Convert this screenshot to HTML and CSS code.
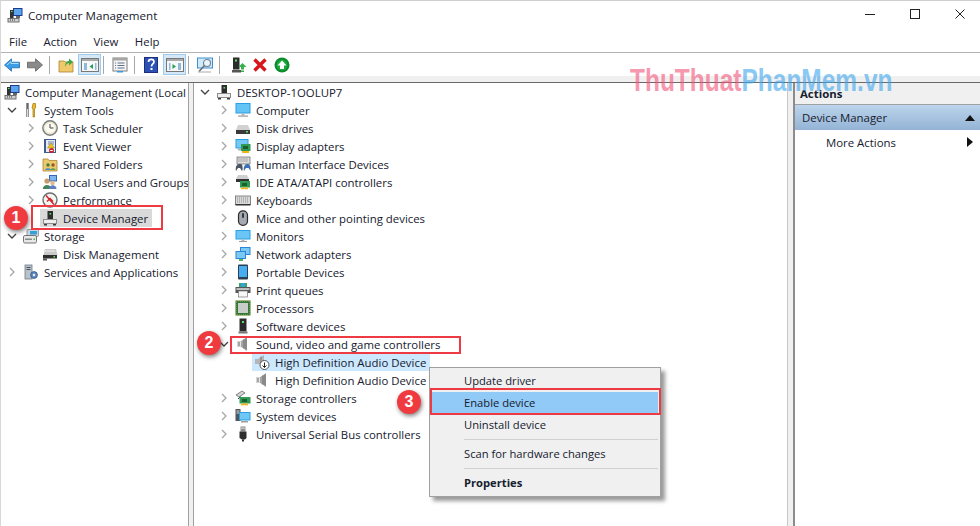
FILE: index.html
```html
<!DOCTYPE html>
<html lang="en">
<head>
  <meta charset="UTF-8">
  <title>Computer Management</title>
  <link rel="stylesheet" href="styles.css">
</head>
<body>
  <svg class="defs" aria-hidden="true">
    <symbol id="i-mgmt" viewBox="0 0 16 16"><rect x="6" y="1" width="9.5" height="8" fill="#1f3c8c"/><rect x="7" y="2" width="7.5" height="6" fill="#5aa5ee"/><rect x="9" y="9" width="4" height="2" fill="#666"/><rect x="3" y="3" width="3.5" height="8" fill="#333"/><rect x="4" y="4" width="1.5" height="1" fill="#6be36b"/><rect x="0.5" y="11" width="12" height="4.5" fill="#6f6f6f"/><rect x="1.5" y="12" width="10" height="2.5" fill="#cfcfcf"/><path d="M3 13h1M5 13h1M7 13h1" stroke="#333"/></symbol>
    <symbol id="i-tools" viewBox="0 0 16 16"><path d="M4.5 1v14" stroke="#666" stroke-width="2.4" fill="none"/><path d="M4.5 7v8" stroke="#ddd"/><path d="M10 1.5h2.5V6l-1 1v8H10V7L9 6z" fill="#f2b91e" stroke="#8a6507" stroke-width=".6"/></symbol>
    <symbol id="i-clock" viewBox="0 0 16 16"><circle cx="8" cy="8" r="7.2" fill="#ece4cc" stroke="#77807e" stroke-width="1.4"/><circle cx="8" cy="8" r="5" fill="#fbfaf3"/><path d="M8 4v4h3.5" stroke="#444" fill="none"/></symbol>
    <symbol id="i-event" viewBox="0 0 16 16"><rect x="2" y="1" width="12" height="14" fill="#3f5d90"/><rect x="4" y="2" width="9" height="12" fill="#e7ecf3"/><path d="M6 4h6M6 6h6" stroke="#6f84a8"/><path d="M9 5l3.5 5h-7z" fill="#f2c31c" stroke="#9b7b10" stroke-width=".5"/><circle cx="9.5" cy="12.5" r="2.5" fill="#c5232b"/><rect x="8.2" y="12" width="2.6" height="1" fill="#fff"/></symbol>
    <symbol id="i-shared" viewBox="0 0 16 16"><path d="M1 3h5l1 1.5h8V15H1z" fill="#eec96c" stroke="#a98734" stroke-width=".8"/><circle cx="6" cy="9" r="1.7" fill="#3f7f3f"/><path d="M3 14c0-2.5 6-2.5 6 0z" fill="#4d8bc9"/><circle cx="11" cy="9" r="1.7" fill="#8a5a30"/><path d="M8.500 14c0-2.500 5-2.500 5 0z" fill="#5aa14f"/></symbol>
    <symbol id="i-users" viewBox="0 0 16 16"><rect x="7" y="1" width="8" height="6.5" fill="#3566b5"/><rect x="8" y="2" width="6" height="4.5" fill="#7fb5ee"/><circle cx="5" cy="7" r="2.6" fill="#cb9a6b"/><path d="M.8 15c0-5.500 8.400-5.500 8.400 0z" fill="#45855a"/><circle cx="10.500" cy="9" r="2.200" fill="#e1b78c"/><path d="M7 15c0-5 7.500-5 7.500 0z" fill="#5d7fc0"/></symbol>
    <symbol id="i-perf" viewBox="0 0 16 16"><circle cx="8" cy="8" r="7" fill="#f4f4f0" stroke="#6e6e6e" stroke-width="1.4"/><path d="M4 3.500l8 9M5 9.500l3-3 3 3" stroke="#d1262c" stroke-width="1.500" fill="none"/></symbol>
    <symbol id="i-dev" viewBox="0 0 16 16"><rect x="5.500" y="1" width="5.500" height="8" fill="#2d2d2d"/><rect x="7.500" y="3" width="1.600" height="1.600" fill="#54e35c"/><rect x="1" y="9" width="14" height="5" fill="#8c8c8c"/><rect x="2" y="10" width="12" height="3" fill="#efefef"/><rect x="2" y="14" width="3" height="1.500" fill="#3c3c3c"/><rect x="11" y="14" width="3" height="1.500" fill="#3c3c3c"/></symbol>
    <symbol id="i-storage" viewBox="0 0 16 16"><rect x="4" y="1.500" width="11.500" height="7" rx="1" fill="#cfd6dc" stroke="#6e7c88" stroke-width=".7"/><rect x="7" y="3" width="7" height="3.500" fill="#35a0d8"/><rect x=".5" y="7.500" width="13" height="7.500" rx="1.400" fill="#e8e8e8" stroke="#666" stroke-width=".9"/><rect x="2" y="10.500" width="7" height="1.500" fill="#888"/><rect x="10.500" y="10.500" width="1.500" height="1.500" fill="#46b04a"/></symbol>
    <symbol id="i-disk" viewBox="0 0 16 16"><path d="M3 3h11l1.500 6h-14z" fill="#c9c9c9"/><rect x="1" y="9" width="14" height="3.500" fill="#2e2e2e"/><rect x="11.500" y="10" width="1.500" height="1.500" fill="#5de35f"/><rect x="1" y="12.500" width="4" height="2" fill="#555"/><path d="M3 5h10" stroke="#f2f2f2"/></symbol>
    <symbol id="i-services" viewBox="0 0 16 16"><rect x="2" y="1" width="7" height="14" fill="#b9c1cb" stroke="#6f7a87" stroke-width=".8"/><path d="M3.500 3.500h4M3.500 5.500h4" stroke="#46505c"/><circle cx="11" cy="11" r="3.400" fill="#5f88c0" stroke="#31507e" stroke-width=".8"/><circle cx="11" cy="11" r="1.200" fill="#e8eef7"/></symbol>
    <symbol id="i-computer" viewBox="0 0 16 16"><rect x=".5" y="1" width="15" height="10.500" fill="#2a9fe4"/><rect x="1.500" y="2" width="13" height="8.500" fill="#64c4f5"/><rect x="6.500" y="11.500" width="3" height="2" fill="#b8b8b8"/><rect x="3" y="13.500" width="10" height="1.200" fill="#9c9c9c"/></symbol>
    <symbol id="i-drive" viewBox="0 0 16 16"><path d="M3 5h10l2 5H1z" fill="#d2d2d2"/><rect x="1" y="10" width="14" height="4" fill="#3a3a3a"/><rect x="11" y="11" width="2" height="1.500" fill="#5de35f"/></symbol>
    <symbol id="i-display" viewBox="0 0 16 16"><rect x=".5" y="1" width="13" height="9.500" fill="#2a9fe4"/><rect x="1.500" y="2" width="11" height="7.500" fill="#75c9f6"/><rect x="3" y="10.500" width="6" height="2" fill="#b0b0b0"/><rect x="6" y="6" width="9.500" height="7" fill="#2f9a52"/><path d="M8 8h5v3H8z" fill="#1b5e31"/><rect x="7" y="13" width="7" height="2" fill="#f0b31b"/></symbol>
    <symbol id="i-hid" viewBox="0 0 16 16"><rect x="2" y="1" width="13" height="7" fill="#dcdcdc" stroke="#777" stroke-width=".8"/><path d="M3.500 3h10M3.500 5h10" stroke="#777" stroke-dasharray="1 1"/><path d="M1 15c-1-4 1-7 3-7h2c2 0 2 7 1 7l-2-3H3z" fill="#4b5563"/><path d="M9 15c-1-4 1-7 3-7h1c2 0 3 3 2.500 7l-2-3H11z" fill="#3f6fb5"/></symbol>
    <symbol id="i-ide" viewBox="0 0 16 16"><path d="M3 1h9l2 4H1z" fill="#cfcfcf"/><rect x="1" y="5" width="13" height="3" fill="#333"/><rect x="5" y="7" width="10" height="6.500" fill="#2f9a52"/><path d="M7 9h5v3H7z" fill="#1b5e31"/><rect x="6" y="13.500" width="7" height="1.700" fill="#f0b31b"/></symbol>
    <symbol id="i-keyboard" viewBox="0 0 16 16"><rect x=".5" y="4" width="15" height="8.500" fill="#dadada" stroke="#6b6b6b" stroke-width=".8"/><path d="M2 6h12M2 8h12M2 10h12" stroke="#8a8a8a" stroke-dasharray="1 1"/><rect x=".5" y="12" width="15" height="1.500" fill="#333"/></symbol>
    <symbol id="i-mouse" viewBox="0 0 16 16"><rect x="3.500" y=".8" width="9" height="14.600" rx="4.300" fill="#a4aab0" stroke="#2d2d2d" stroke-width="1.200"/><rect x="7" y="3" width="2" height="5" rx="1" fill="#2e3a46"/></symbol>
    <symbol id="i-monitor" viewBox="0 0 16 16"><rect x=".5" y="2" width="15" height="9.500" fill="#2a9fe4"/><rect x="1.500" y="3" width="13" height="7.500" fill="#6cc6f5"/><rect x="6.500" y="11.500" width="3" height="1.500" fill="#b8b8b8"/><rect x="4" y="13" width="8" height="1" fill="#9c9c9c"/></symbol>
    <symbol id="i-net" viewBox="0 0 16 16"><rect x="5" y="1" width="10.500" height="8" fill="#2a86d8"/><rect x="6" y="2" width="8.500" height="6" fill="#7cc8f5"/><rect x=".5" y="5" width="10.500" height="8" fill="#2a86d8"/><rect x="1.500" y="6" width="8.500" height="6" fill="#7cc8f5"/><rect x="4" y="13" width="4" height="2" fill="#4fb45a"/></symbol>
    <symbol id="i-portable" viewBox="0 0 16 16"><rect x="3" y=".5" width="10" height="15" rx="1" fill="#2c3e50"/><rect x="4" y="2" width="8" height="11" fill="#46aef0"/></symbol>
    <symbol id="i-printer" viewBox="0 0 16 16"><path d="M4 1h8v4H4z" fill="#3ba55d"/><path d="M6 1h4v4H6z" fill="#39a0e0"/><rect x=".5" y="5" width="15" height="6" fill="#555"/><rect x="1.500" y="6" width="13" height="2" fill="#bdbdbd"/><rect x="3.500" y="9" width="9" height="6" fill="#f7f7f7" stroke="#777" stroke-width=".7"/></symbol>
    <symbol id="i-cpu" viewBox="0 0 16 16"><rect x=".5" y=".5" width="15" height="15" fill="#2f7a3c"/><rect x="1" y="1" width="14" height="14" fill="none" stroke="#d7b13a" stroke-width=".8" stroke-dasharray="1 1"/><rect x="3" y="3" width="10" height="10" fill="#c9cdc9"/></symbol>
    <symbol id="i-software" viewBox="0 0 16 16"><rect x="4.500" y=".5" width="7" height="13" fill="#2b2b2b"/><rect x="7" y="3" width="2" height="2" fill="#58e35f"/><rect x="3.500" y="13.500" width="9" height="2" fill="#777"/></symbol>
    <symbol id="i-speaker" viewBox="0 0 16 16"><path d="M2 5.500h3.500L12 1v14L5.500 10.500H2z" fill="#a6a6a6"/><path d="M5.500 5.500v5" stroke="#e8e8e8"/><path d="M9 3.500v9M11 2.500v11" stroke="#6e6e6e"/><path d="M2.500 6v4" stroke="#d5d5d5"/></symbol>
    <symbol id="i-speakerdown" viewBox="0 0 16 16"><path d="M1 5h3l6-4v9H4L1 10z" fill="#b5b5b5"/><path d="M7 2.500v7" stroke="#777"/><circle cx="10.500" cy="11" r="4.500" fill="#fff" stroke="#555"/><path d="M10.500 8.500v5M8.500 11.500l2 2 2-2" stroke="#222" fill="none"/></symbol>
    <symbol id="i-storagectl" viewBox="0 0 16 16"><path d="M1 5l6-4 3 2-6 4z" fill="#d5d5d5" stroke="#555" stroke-width=".7"/><path d="M3 9l2-2 3 1" stroke="#333" fill="none"/><rect x="4.500" y="7" width="11" height="6.500" fill="#2f9a52"/><path d="M7 9h5v3H7z" fill="#1b5e31"/><rect x="6" y="13.500" width="7" height="1.800" fill="#f0b31b"/></symbol>
    <symbol id="i-system" viewBox="0 0 16 16"><rect x=".5" y="1" width="5" height="12" fill="#555"/><path d="M1.500 3h3M1.500 5h3" stroke="#ddd"/><rect x="4" y="4" width="11.500" height="8.500" fill="#2a9fe4"/><rect x="5" y="5" width="9.500" height="6.500" fill="#70c7f5"/><rect x="6" y="13" width="7" height="1.500" fill="#9f9f9f"/></symbol>
    <symbol id="i-usb" viewBox="0 0 16 16"><rect x="5.500" y=".5" width="5" height="5" fill="#8d8d8d"/><rect x="6.500" y="1.500" width="1" height="1.500" fill="#fff"/><rect x="8.500" y="1.500" width="1" height="1.500" fill="#fff"/><path d="M4.500 5.500h7V12L10 13.500H7L4.500 12z" fill="#2f2f2f"/><rect x="7" y="13.500" width="2" height="2" fill="#2f2f2f"/></symbol>
    <symbol id="i-open" viewBox="0 0 10 10"><path d="M1 3l4 4 4-4" fill="none" stroke="#404040" stroke-width="1.300"/></symbol>
    <symbol id="i-closed" viewBox="0 0 10 10"><path d="M3 1l4 4-4 4" fill="none" stroke="#a6a6a6" stroke-width="1.300"/></symbol>
  </svg>

  <div class="window">
    <header class="titlebar">
      <svg class="icon title-icon"><use href="#i-mgmt"/></svg>
      <span class="title">Computer Management</span>
      <div class="win-controls">
        <svg class="win-btn" viewBox="0 0 10 10"><path d="M0 5.500h10" stroke="#222"/></svg>
        <svg class="win-btn" viewBox="0 0 10 10"><rect x=".5" y=".5" width="9" height="9" fill="none" stroke="#222"/></svg>
        <svg class="win-btn" viewBox="0 0 10 10"><path d="M.5 .5l9 9M9.500 .5l-9 9" stroke="#222"/></svg>
      </div>
    </header>

    <nav class="menubar">
      <span>File</span><span>Action</span><span>View</span><span>Help</span>
    </nav>

    <div class="toolbar">
      <svg class="tool tool-arrow" viewBox="0 0 16 14"><path d="M.5 7L7.500 .8v3.400h8v5.600h-8v3.400z" fill="#3d9de6" stroke="#1d6db5" stroke-width=".8"/><path d="M3 7l4-3.500v2h7.500" fill="none" stroke="#a9dcfb"/></svg>
      <svg class="tool tool-arrow tool-fwd" viewBox="0 0 16 14"><path d="M15.500 7L8.500 .8v3.400h-8v5.600h8v3.400z" fill="#8a8a8a" stroke="#5f5f5f" stroke-width=".8"/></svg>
      <i class="tool-sep"></i>
      <svg class="tool tool-tight" viewBox="0 0 16 16"><path d="M1 4h5l1 1h8v10H1z" fill="#f0c96a" stroke="#a98734" stroke-width=".8"/><path d="M7 10c0-4 2-6 4-6V1.500L15 5l-4 3.500V6c-1.500 0-3 1.500-4 4z" fill="#3fa648"/></svg>
      <span class="tool-on"><svg class="tool" viewBox="0 0 18 16"><rect x=".5" y="1.500" width="17" height="13" fill="#f7f7f7" stroke="#777"/><rect x="1" y="2" width="16" height="2" fill="#a9a9a9"/><path d="M3 6h3v7H3zM14 6h1.500v7H14z" fill="#8eb9df"/><path d="M12 7v5L8.500 9.500z" fill="#2f9a52"/></svg></span>
      <i class="tool-sep tool-sep-close"></i>
      <svg class="tool" viewBox="0 0 16 16"><rect x="1" y="1" width="14" height="13" fill="#f5f5f5" stroke="#7d7d7d"/><rect x="1" y="1" width="14" height="2.500" fill="#a6a6a6"/><path d="M3 6h1M3 8.500h1M3 11h1M5.500 6h7M5.500 8.500h7M5.500 11h7" stroke="#5f6f86"/><rect x="5" y="14" width="6" height="1.500" fill="#3a9de0"/></svg>
      <i class="tool-sep"></i>
      <svg class="tool tool-tight" viewBox="0 0 16 16"><rect x="1.500" y=".5" width="13" height="15" fill="#2c50b4" stroke="#1c2f7c"/><path d="M5.500 5c0-3.500 5.500-3.500 5.500 0 0 2-2.500 2-2.500 4.500" fill="none" stroke="#fff" stroke-width="1.700"/><rect x="7.500" y="11" width="2" height="2" fill="#fff"/></svg>
      <span class="tool-on"><svg class="tool" viewBox="0 0 18 16"><rect x=".5" y="1.500" width="17" height="13" fill="#f7f7f7" stroke="#777"/><rect x="1" y="2" width="16" height="2" fill="#a9a9a9"/><path d="M3 6h1.500v7H3zM12 6h3v7h-3z" fill="#8eb9df"/><path d="M6.500 7v5l3.500-2.500z" fill="#2f9a52"/></svg></span>
      <i class="tool-sep tool-sep-close"></i>
      <svg class="tool" viewBox="0 0 16 16"><rect x=".5" y="1" width="15" height="10" fill="#cfeafb" stroke="#3d8fd0"/><circle cx="10" cy="6" r="3.500" fill="#e8f5fd" stroke="#6c7f8d" stroke-width="1.100"/><path d="M7.500 8.500L2 14.500" stroke="#6c6c6c" stroke-width="1.500"/><path d="M1 15h13" stroke="#aaa"/></svg>
      <i class="tool-sep"></i>
      <svg class="tool tool-update" viewBox="0 0 16 16"><rect x="2" y=".5" width="6.500" height="12" fill="#2b2b2b"/><rect x="4" y="2.500" width="2" height="2" fill="#58e35f"/><rect x="1" y="13" width="9" height="2.500" fill="#555"/><path d="M11.500 6l4 4H13v2.500h-3V10H7.500z" fill="#36b04a"/><rect x="10" y="13.500" width="3" height="1.500" fill="#36b04a"/></svg>
      <svg class="tool" viewBox="0 0 16 16"><path d="M2.500 2.500l11 11M13.500 2.500l-11 11" stroke="#d8141c" stroke-width="3.400"/></svg>
      <svg class="tool" viewBox="0 0 16 16"><circle cx="8" cy="8" r="7.500" fill="#0d8a2c"/><circle cx="8" cy="8" r="5.500" fill="#19a83c"/><path d="M8 3.500l4.500 5H10V12H6V8.500H3.500z" fill="#fff"/></svg>
    </div>

    <div class="strip"></div>

    <div class="panes">
      <aside class="pane tree-left">
        <div class="row root-left"><span class="node"><svg class="icon"><use href="#i-mgmt"/></svg><span>Computer Management (Local</span></span></div>
        <div class="row d1"><svg class="twisty"><use href="#i-open"/></svg><span class="node"><svg class="icon"><use href="#i-tools"/></svg><span>System Tools</span></span></div>
        <div class="row d2"><svg class="twisty"><use href="#i-closed"/></svg><span class="node"><svg class="icon"><use href="#i-clock"/></svg><span>Task Scheduler</span></span></div>
        <div class="row d2"><svg class="twisty"><use href="#i-closed"/></svg><span class="node"><svg class="icon"><use href="#i-event"/></svg><span>Event Viewer</span></span></div>
        <div class="row d2"><svg class="twisty"><use href="#i-closed"/></svg><span class="node"><svg class="icon"><use href="#i-shared"/></svg><span>Shared Folders</span></span></div>
        <div class="row d2"><svg class="twisty"><use href="#i-closed"/></svg><span class="node"><svg class="icon"><use href="#i-users"/></svg><span>Local Users and Groups</span></span></div>
        <div class="row d2"><svg class="twisty"><use href="#i-closed"/></svg><span class="node"><svg class="icon"><use href="#i-perf"/></svg><span>Performance</span></span></div>
        <div class="row d2 leaf"><span class="node selected-grey"><svg class="icon"><use href="#i-dev"/></svg><span>Device Manager</span></span></div>
        <div class="row d1"><svg class="twisty"><use href="#i-open"/></svg><span class="node"><svg class="icon"><use href="#i-storage"/></svg><span>Storage</span></span></div>
        <div class="row d2 leaf"><span class="node"><svg class="icon"><use href="#i-disk"/></svg><span>Disk Management</span></span></div>
        <div class="row d1"><svg class="twisty"><use href="#i-closed"/></svg><span class="node"><svg class="icon"><use href="#i-services"/></svg><span>Services and Applications</span></span></div>
      </aside>

      <main class="pane tree-main">
        <div class="row d1"><svg class="twisty"><use href="#i-open"/></svg><span class="node"><svg class="icon"><use href="#i-dev"/></svg><span>DESKTOP-1OOLUP7</span></span></div>
        <div class="row d2"><svg class="twisty"><use href="#i-closed"/></svg><span class="node"><svg class="icon"><use href="#i-computer"/></svg><span>Computer</span></span></div>
        <div class="row d2"><svg class="twisty"><use href="#i-closed"/></svg><span class="node"><svg class="icon"><use href="#i-drive"/></svg><span>Disk drives</span></span></div>
        <div class="row d2"><svg class="twisty"><use href="#i-closed"/></svg><span class="node"><svg class="icon"><use href="#i-display"/></svg><span>Display adapters</span></span></div>
        <div class="row d2"><svg class="twisty"><use href="#i-closed"/></svg><span class="node"><svg class="icon"><use href="#i-hid"/></svg><span>Human Interface Devices</span></span></div>
        <div class="row d2"><svg class="twisty"><use href="#i-closed"/></svg><span class="node"><svg class="icon"><use href="#i-ide"/></svg><span>IDE ATA/ATAPI controllers</span></span></div>
        <div class="row d2"><svg class="twisty"><use href="#i-closed"/></svg><span class="node"><svg class="icon"><use href="#i-keyboard"/></svg><span>Keyboards</span></span></div>
        <div class="row d2"><svg class="twisty"><use href="#i-closed"/></svg><span class="node"><svg class="icon"><use href="#i-mouse"/></svg><span>Mice and other pointing devices</span></span></div>
        <div class="row d2"><svg class="twisty"><use href="#i-closed"/></svg><span class="node"><svg class="icon"><use href="#i-monitor"/></svg><span>Monitors</span></span></div>
        <div class="row d2"><svg class="twisty"><use href="#i-closed"/></svg><span class="node"><svg class="icon"><use href="#i-net"/></svg><span>Network adapters</span></span></div>
        <div class="row d2"><svg class="twisty"><use href="#i-closed"/></svg><span class="node"><svg class="icon"><use href="#i-portable"/></svg><span>Portable Devices</span></span></div>
        <div class="row d2"><svg class="twisty"><use href="#i-closed"/></svg><span class="node"><svg class="icon"><use href="#i-printer"/></svg><span>Print queues</span></span></div>
        <div class="row d2"><svg class="twisty"><use href="#i-closed"/></svg><span class="node"><svg class="icon"><use href="#i-cpu"/></svg><span>Processors</span></span></div>
        <div class="row d2"><svg class="twisty"><use href="#i-closed"/></svg><span class="node"><svg class="icon"><use href="#i-software"/></svg><span>Software devices</span></span></div>
        <div class="row d2"><svg class="twisty"><use href="#i-open"/></svg><span class="node"><svg class="icon"><use href="#i-speaker"/></svg><span>Sound, video and game controllers</span></span></div>
        <div class="row d3"><span class="node selected-blue"><svg class="icon"><use href="#i-speakerdown"/></svg><span>High Definition Audio Device</span></span></div>
        <div class="row d3"><span class="node"><svg class="icon"><use href="#i-speaker"/></svg><span>High Definition Audio Device</span></span></div>
        <div class="row d2"><svg class="twisty"><use href="#i-closed"/></svg><span class="node"><svg class="icon"><use href="#i-storagectl"/></svg><span>Storage controllers</span></span></div>
        <div class="row d2"><svg class="twisty"><use href="#i-closed"/></svg><span class="node"><svg class="icon"><use href="#i-system"/></svg><span>System devices</span></span></div>
        <div class="row d2"><svg class="twisty"><use href="#i-closed"/></svg><span class="node"><svg class="icon"><use href="#i-usb"/></svg><span>Universal Serial Bus controllers</span></span></div>
      </main>

      <aside class="pane actions">
        <div class="actions-head">Actions</div>
        <div class="actions-group">
          <span>Device Manager</span>
          <svg class="caret" viewBox="0 0 10 6"><path d="M5 0l5 6H0z" fill="#111"/></svg>
        </div>
        <div class="actions-item">
          <span>More Actions</span>
          <svg class="caret-right" viewBox="0 0 6 10"><path d="M0 0l6 5-6 5z" fill="#111"/></svg>
        </div>
      </aside>
    </div>
  </div>

  <!-- stuff drawn on top of the window -->
  <div class="watermark"><span class="wm-red">ThuThuat</span><span class="wm-blue">PhanMem.vn</span></div>

  <ul class="context-menu">
    <li>Update driver</li>
    <li class="active">Enable device</li>
    <li>Uninstall device</li>
    <li class="sep"></li>
    <li>Scan for hardware changes</li>
    <li class="sep"></li>
    <li class="bold">Properties</li>
  </ul>

  <div class="mark mark-device"></div>
  <div class="mark mark-sound"></div>
  <div class="mark mark-enable"></div>
  <div class="badge badge-1">1</div>
  <div class="badge badge-2">2</div>
  <div class="badge badge-3">3</div>
</body>
</html>
```

FILE: styles.css
```css
* {
  margin: 0;
  padding: 0;
  box-sizing: border-box;
}

html,
body {
  height: 100%;
  overflow: hidden;
}

body {
  position: relative;
  font-family: "Open Sans", "Noto Sans", sans-serif;
  font-size: 11.4px;
  color: #16202e;
  background: #fff;
}

.defs {
  position: absolute;
  width: 0;
  height: 0;
}

.icon {
  width: 16px;
  height: 16px;
  flex: none;
}

.window {
  height: 526px;
  display: flex;
  flex-direction: column;
  border-top: 1px solid #cfcfcf;
  border-left: 1px solid #d8d8d8;
}

/* title bar */
.titlebar {
  height: 29px;
  display: flex;
  align-items: center;
  padding: 0 0 1px 6px;
}

.title {
  margin-left: 5px;
  font-size: 11.6px;
}

.win-controls {
  margin-left: auto;
  display: flex;
  gap: 35px;
  padding: 0 15px 2px 0;
}

.win-btn {
  width: 10px;
  height: 10px;
}

/* menu */
.menubar {
  height: 23px;
  display: flex;
  align-items: center;
  gap: 16.500px;
  padding-left: 8px;
  border-bottom: 1px solid #b4b4b4;
}

/* toolbar */
.toolbar {
  height: 23px;
  display: flex;
  align-items: center;
  padding-left: 3px;
  gap: 6px;
}

.tool {
  width: 16px;
  height: 16px;
  flex: none;
}

.tool-arrow {
  height: 14px;
}

.tool-fwd {
  margin-left: 1px;
}

.tool-tight {
  margin-right: -2px;
}

.tool-update {
  margin-left: 3px;
  margin-right: -1px;
}

.tool-sep {
  width: 1px;
  height: 18px;
  background: #a8a8a8;
  margin-right: 2px;
}

.tool-sep-close {
  margin-left: -4px;
}

.tool-on {
  width: 23px;
  height: 21px;
  display: flex;
  align-items: center;
  justify-content: center;
  background: #d5e8f8;
  border: 1px solid #9fcbee;
}

.tool-on .tool {
  width: 18px;
}

.strip {
  height: 7px;
  background: #f0f0f0;
  border-bottom: 1px solid #696969;
}

/* panes */
.panes {
  flex: 1;
  display: flex;
  min-height: 0;
  background: #f0f0f0;
}

.pane {
  overflow: hidden;
  background: #fff;
}

.tree-left {
  width: 188px;
  border-right: 1px solid #a0a0a0;
}

.tree-main {
  width: 595px;
  margin: 0 5px 0 4px;
  border-left: 1px solid #a0a0a0;
  border-right: 1px solid #c8c8c8;
}

.actions {
  flex: 1;
  border-left: 2px solid #8c8c8c;
}

/* tree rows */
.row {
  height: 18px;
  display: flex;
  align-items: center;
  white-space: nowrap;
}

.root-left {
  padding-left: 1px;
}

.d1 {
  padding-left: 6px;
}

.d2 {
  padding-left: 25px;
}

.d3 {
  padding-left: 58px;
}

.twisty {
  width: 10px;
  height: 10px;
  margin-right: 4px;
  flex: none;
}

.leaf {
  padding-left: 39px;
}

.node {
  height: 18px;
  display: inline-flex;
  align-items: center;
  gap: 5px;
  padding: 0 4px 0 2px;
}

.selected-grey {
  background: #d9d9d9;
}

.selected-blue {
  background: #cce8ff;
}

/* actions pane */
.actions-head {
  height: 22px;
  display: flex;
  align-items: center;
  padding-left: 5px;
  font-weight: 700;
  background: #f0f0f0;
  border-bottom: 1px solid #a0a0a0;
}

.actions-group {
  height: 25px;
  display: flex;
  align-items: center;
  justify-content: space-between;
  padding: 0 5px 0 7px;
  background: linear-gradient(#bcd4ec, #94b3d5);
}

.caret {
  width: 10px;
  height: 6px;
}

.actions-item {
  height: 24px;
  display: flex;
  align-items: center;
  justify-content: space-between;
  padding: 0 7px 0 31px;
}

.caret-right {
  width: 6px;
  height: 10px;
}

/* overlays */
.watermark {
  position: absolute;
  left: 630px;
  top: 62px;
  font-family: "Liberation Sans", sans-serif;
  font-weight: 700;
  font-size: 32px;
  line-height: 36px;
  white-space: nowrap;
  opacity: .6;
  transform: scaleX(.765);
  transform-origin: left top;
}

.wm-red {
  color: #f2567a;
}

.wm-blue {
  color: #3ba6ee;
}

.context-menu {
  position: absolute;
  left: 429px;
  top: 367px;
  width: 232px;
  height: 130px;
  padding: 2px;
  list-style: none;
  font-size: 11.2px;
  background: #f0f0f0;
  border: 1px solid #a0a0a0;
  box-shadow: 4px 4px 4px rgba(0, 0, 0, .4);
}

.context-menu li {
  height: 22px;
  padding-left: 32px;
  line-height: 22px;
}

.context-menu .active {
  background: #91c9f7;
}

.context-menu .sep {
  height: 1px;
  margin: 3px 0 3px 32px;
  padding: 0;
  background: #d0d0d0;
}

.context-menu .bold {
  font-weight: 700;
}

.mark {
  position: absolute;
  border: 2px solid #ee3a42;
}

.mark-device {
  left: 31px;
  top: 205px;
  width: 132px;
  height: 25px;
}

.mark-sound {
  left: 230px;
  top: 336px;
  width: 231px;
  height: 18px;
}

.mark-enable {
  left: 430px;
  top: 388px;
  width: 231px;
  height: 27px;
}

.badge {
  position: absolute;
  width: 24px;
  height: 24px;
  border-radius: 50%;
  background: #ef3b3f;
  color: #fff;
  font-family: "Liberation Sans", sans-serif;
  font-size: 16px;
  font-weight: 700;
  line-height: 24px;
  text-align: center;
  box-shadow: 1px 2px 4px rgba(0, 0, 0, .5);
}

.badge-1 {
  left: 4px;
  top: 206px;
}

.badge-2 {
  left: 197px;
  top: 331px;
}

.badge-3 {
  left: 397px;
  top: 390px;
}
```
